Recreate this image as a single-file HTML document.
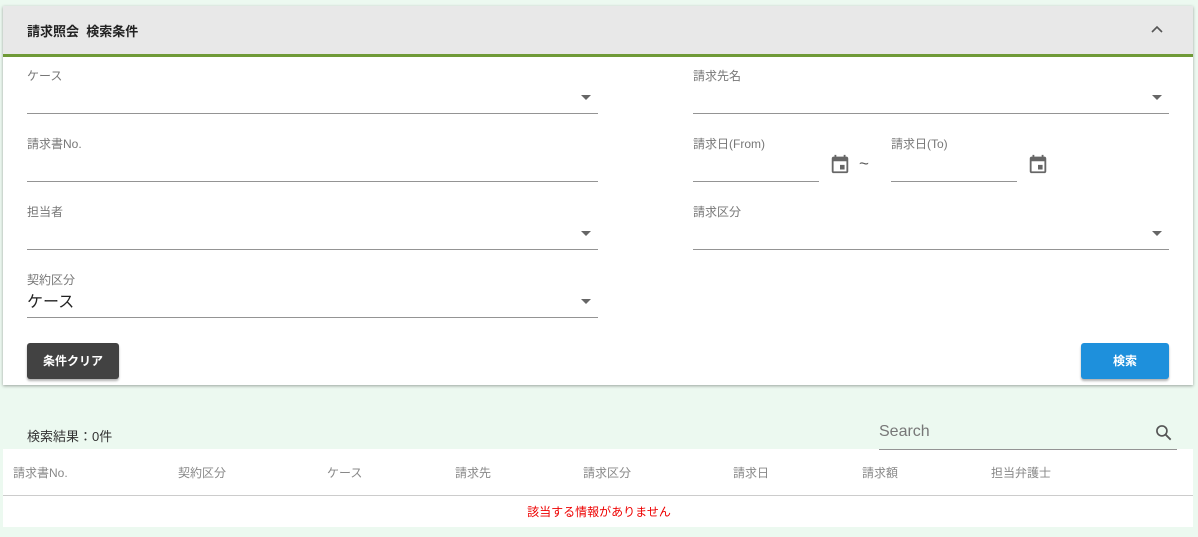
<!DOCTYPE html>
<html><head><meta charset="utf-8"><style>
*{box-sizing:border-box;margin:0;padding:0}
body{width:1198px;height:537px;background:#ecf9f0;font-family:"Liberation Sans","Noto Sans CJK JP",sans-serif;position:relative;overflow:hidden}
.a{position:absolute}
.card{left:3px;top:6px;width:1190px;height:379px;background:#fff;box-shadow:0 1px 3px rgba(0,0,0,.35)}
.hd{left:3px;top:6px;width:1190px;height:51px;background:#e8e8e8;border-bottom:3px solid #6f9a37}
.lbl{font-size:12px;color:#777}
.ln{height:1px;background:#949494}
.tri{width:0;height:0;border-left:5px solid transparent;border-right:5px solid transparent;border-top:5px solid #666}
.th{font-size:12px;color:#888;top:464px}
</style></head><body>
<div class="a card"></div>
<div class="a hd"></div>
<div class="a" style="left:27px;top:21px;font-size:13px;font-weight:bold;color:#222">請求照会&nbsp;&nbsp;検索条件</div>
<svg class="a" style="left:1150px;top:24px" width="14" height="10"><path d="M2 8 L7 3 L12 8" stroke="#555" stroke-width="1.6" fill="none"/></svg>

<div class="a lbl" style="left:27px;top:67px">ケース</div>
<div class="a ln" style="left:27px;top:113px;width:571px"></div>
<div class="a tri" style="left:581px;top:95px"></div>
<div class="a lbl" style="left:693px;top:67px">請求先名</div>
<div class="a ln" style="left:693px;top:113px;width:476px"></div>
<div class="a tri" style="left:1152px;top:95px"></div>

<div class="a lbl" style="left:27px;top:135px">請求書No.</div>
<div class="a ln" style="left:27px;top:181px;width:571px"></div>
<div class="a lbl" style="left:693px;top:135px">請求日(From)</div>
<div class="a ln" style="left:693px;top:181px;width:126px"></div>
<svg class="a" style="left:829px;top:153px" width="22" height="22" viewBox="0 0 24 24"><path fill="#666" d="M19 4h-1V2h-2v2H8V2H6v2H5c-1.1 0-2 .9-2 2v14c0 1.1.9 2 2 2h14c1.1 0 2-.9 2-2V6c0-1.1-.9-2-2-2zm0 16H5V9h14v11zM12 13h5v5h-5z"/></svg>
<div class="a" style="left:859px;top:154px;font-size:17px;color:#555">~</div>
<div class="a lbl" style="left:891px;top:135px">請求日(To)</div>
<div class="a ln" style="left:891px;top:181px;width:126px"></div>
<svg class="a" style="left:1027px;top:153px" width="22" height="22" viewBox="0 0 24 24"><path fill="#666" d="M19 4h-1V2h-2v2H8V2H6v2H5c-1.1 0-2 .9-2 2v14c0 1.1.9 2 2 2h14c1.1 0 2-.9 2-2V6c0-1.1-.9-2-2-2zm0 16H5V9h14v11zM12 13h5v5h-5z"/></svg>

<div class="a lbl" style="left:27px;top:203px">担当者</div>
<div class="a ln" style="left:27px;top:249px;width:571px"></div>
<div class="a tri" style="left:581px;top:231px"></div>
<div class="a lbl" style="left:693px;top:203px">請求区分</div>
<div class="a ln" style="left:693px;top:249px;width:476px"></div>
<div class="a tri" style="left:1152px;top:231px"></div>

<div class="a lbl" style="left:27px;top:271px">契約区分</div>
<div class="a" style="left:27px;top:288px;font-size:16px;color:#222">ケース</div>
<div class="a ln" style="left:27px;top:317px;width:571px"></div>
<div class="a tri" style="left:581px;top:299px"></div>

<div class="a" style="left:27px;top:343px;width:92px;height:36px;background:#424242;border-radius:3px;box-shadow:0 2px 2px rgba(0,0,0,.3);color:#fff;font-size:12px;font-weight:bold;text-align:center;line-height:36px">条件クリア</div>
<div class="a" style="left:1081px;top:343px;width:88px;height:36px;background:#1e90dc;border-radius:3px;box-shadow:0 2px 2px rgba(0,0,0,.3);color:#fff;font-size:12px;font-weight:bold;text-align:center;line-height:36px">検索</div>

<div class="a" style="left:27px;top:426px;font-size:13px;color:#333">検索結果：0件</div>
<div class="a" style="left:879px;top:423px;font-size:16px;color:#777">Search</div>
<svg class="a" style="left:1154px;top:423px" width="20" height="20" viewBox="0 0 24 24"><circle cx="9.5" cy="9.5" r="6" stroke="#555" stroke-width="2" fill="none"/><path d="M14 14l6 6" stroke="#555" stroke-width="2.2"/></svg>
<div class="a" style="left:3px;top:449px;width:1190px;height:78px;background:#fff"></div>
<div class="a ln" style="left:879px;top:449px;width:298px"></div>
<div class="a th" style="left:13px">請求書No.</div>
<div class="a th" style="left:178px">契約区分</div>
<div class="a th" style="left:327px">ケース</div>
<div class="a th" style="left:455px">請求先</div>
<div class="a th" style="left:583px">請求区分</div>
<div class="a th" style="left:733px">請求日</div>
<div class="a th" style="left:862px">請求額</div>
<div class="a th" style="left:991px">担当弁護士</div>
<div class="a" style="left:3px;top:495px;width:1190px;height:1px;background:#ccc"></div>
<div class="a" style="left:0;width:1198px;top:503px;text-align:center;font-size:12px;color:#e00">該当する情報がありません</div>
</body></html>
